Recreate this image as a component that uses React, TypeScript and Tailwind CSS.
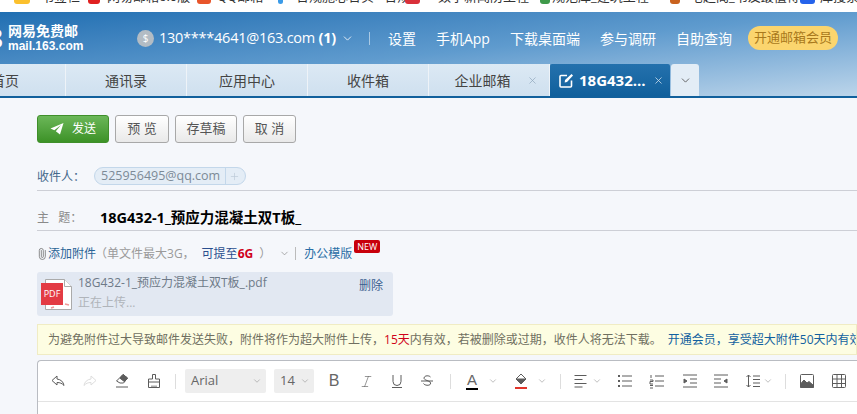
import { ChevronDown, Italic, Paperclip, Plus, X } from "lucide-react";

const BOOKMARKS = [
  { id: "b1", label: "书签栏", color: "bg-[#fbc02d]", iconW: "w-[16px]", box: "ml-[14px] w-[74px]", gap: "ml-[11px]" },
  { id: "b2", label: "网易邮箱6.0版", color: "bg-[#e02020]", iconW: "w-[12px]", box: "w-[109px]", gap: "ml-[7px]" },
  { id: "b3", label: "QQ邮箱", color: "bg-[#e8552a]", iconW: "w-[14px]", box: "w-[81px]", gap: "ml-[6px]" },
  { id: "b4", label: "合规施心合实 · 合规", color: "bg-[#3b9be8]", iconW: "w-[5px]", box: "w-[127px]", gap: "ml-[13px]" },
  { id: "b5", label: "数字新闻防工程", color: "bg-[#d9303a]", iconW: "w-[15px]", box: "w-[135px]", gap: "ml-[18px]" },
  { id: "b6", label: "规范库_建筑工程", color: "bg-[#3f9a4a]", iconW: "w-[10px]", box: "w-[130px]", gap: "ml-[2px]" },
  { id: "b7", label: "宅超阁_书友最值得", color: "bg-[#c9621e]", iconW: "w-[10px]", box: "w-[130px]", gap: "ml-[10px]" },
  { id: "b8", label: "库搜索", color: "bg-[#2563eb]", iconW: "w-[15px]", box: "w-[57px]", gap: "ml-[5px]" },
];

const NAV_LINKS = ["设置", "手机App", "下载桌面端", "参与调研", "自助查询"];

const TABS = [
  { id: "t1", label: "通讯录", close: false },
  { id: "t2", label: "应用中心", close: false },
  { id: "t3", label: "收件箱", close: false },
  { id: "t4", label: "企业邮箱", close: true },
];

function Ico({ children, className = "" }: { children: React.ReactNode; className?: string }) {
  return (
    <svg
      width="16"
      height="16"
      viewBox="0 0 16 16"
      fill="none"
      stroke="#5c5c5c"
      strokeWidth="1"
      className={`shrink-0 ${className}`}
    >
      {children}
    </svg>
  );
}

function Caret({ className = "" }: { className?: string }) {
  return <ChevronDown size={10} strokeWidth={1.5} className={`shrink-0 text-[#999] ${className}`} />;
}

function Divider({ className = "" }: { className?: string }) {
  return <span className={`h-[15px] w-px shrink-0 bg-[#ddd] ${className}`} />;
}

function GrayButton({ label, className }: { label: string; className: string }) {
  return (
    <button
      type="button"
      className={`h-[28px] rounded-[3px] border border-[#a8a8a8] bg-gradient-to-b from-white to-[#e9e9e9] text-[13px] text-[#555] ${className}`}
    >
      {label}
    </button>
  );
}

export default function App() {
  return (
    <div className="h-[414px] w-[857px] overflow-hidden bg-[#f5f7fb] font-['Open_Sans','Noto_Sans_CJK_SC',sans-serif]">
      {/* bookmarks bar, only the bottom of it is left in the crop */}
      <div className="flex h-[12px] items-start overflow-hidden bg-white">
        {BOOKMARKS.map((b) => (
          <div key={b.id} className={`flex shrink-0 items-start overflow-hidden ${b.box}`}>
            <span className={`h-[4px] shrink-0 rounded-b-[3px] ${b.iconW} ${b.color}`} />
            <span className={`mt-[-11px] whitespace-nowrap text-[13px] leading-[15px] text-[#333] ${b.gap}`}>
              {b.label}
            </span>
          </div>
        ))}
      </div>

      {/* blue header + tabs */}
      <div className="h-[86px] border-b-2 border-[#11609c] bg-gradient-to-br from-[#1f6fb2] via-[#5f9bce] to-[#bcd5ea]">
        <div className="flex h-[52px] items-center">
          <div className="ml-[-12px] mr-[12px] w-[8px] text-[26px] font-bold leading-none text-white">8</div>
          <div className="w-[124px] font-['Noto_Sans_CJK_SC',sans-serif] text-white">
            <div className="text-[14px] font-bold leading-[17px]">网易免费邮</div>
            <div className="font-['Liberation_Sans',sans-serif] text-[12px] font-bold leading-[15px]">mail.163.com</div>
          </div>
          <span className="ml-[5px] flex h-[17px] w-[17px] shrink-0 items-center justify-center rounded-full bg-[#b3bcc4] text-[10px] text-white">
            $
          </span>
          <span className="ml-[5px] whitespace-nowrap text-[14.5px] tracking-[-0.25px] text-white">
            130****4641@163.com <b>(1)</b>
          </span>
          <ChevronDown size={13} strokeWidth={1.5} className="ml-[5px] text-white" />
          <span className="ml-[15px] mr-[18px] h-[13px] w-px bg-[#a9c9e4]" />
          <div className="flex items-center gap-[20px] text-[14px] text-white">
            {NAV_LINKS.map((l) => (
              <span key={l} className="whitespace-nowrap">
                {l}
              </span>
            ))}
          </div>
          <span className="ml-[16px] flex h-[24px] w-[90px] items-center justify-center rounded-full bg-[#fbd56e] text-[13px] text-[#a9791c]">
            开通邮箱会员
          </span>
        </div>

        <div className="flex h-[32px] items-stretch text-[14px] text-[#444]">
          <div className="flex w-[66px] items-center overflow-hidden border-r border-[#eef3f8] bg-gradient-to-b from-[#dce9f4] to-[#cfe0ef]">
            <span className="ml-[-9px] whitespace-nowrap">首页</span>
          </div>
          {TABS.map((t) => (
            <div
              key={t.id}
              className={`relative flex w-[121px] items-center justify-center border-r border-[#eef3f8] bg-gradient-to-b from-[#dce9f4] to-[#cfe0ef] ${t.close ? "pr-[13px]" : ""}`}
            >
              {t.label}
              {t.close && <X size={11} strokeWidth={1.5} className="absolute right-[11px] text-[#8fa6bb]" />}
            </div>
          ))}
          <div className="flex w-[120px] items-center rounded-t-[2px] bg-gradient-to-b from-[#2471ad] to-[#10609c] pl-[9px] text-white">
            <svg width="15" height="15" viewBox="0 0 15 15" fill="none" stroke="white" strokeWidth="1.6" className="shrink-0">
              <path d="M8 2.500H2a1 1 0 0 0-1 1V13a1 1 0 0 0 1 1h9.500a1 1 0 0 0 1-1V7.500" />
              <path d="M6 7l6.500-6 1.500 1.500L8 9l-2.300.6z" fill="white" stroke="none" />
            </svg>
            <span className="ml-[5px] whitespace-nowrap text-[15px] font-bold">18G432...</span>
            <X size={11} strokeWidth={1.8} className="ml-[7px] text-[#c5d9ea]" />
          </div>
          <div className="ml-px flex w-[28px] items-center justify-center rounded-t-[3px] bg-[#e3edf6]">
            <ChevronDown size={13} strokeWidth={1.6} className="text-[#555]" />
          </div>
        </div>
      </div>

      {/* compose */}
      <div className="pl-[37px]">
        <div className="flex items-center gap-[6px] pt-[17px]">
          <button
            type="button"
            className="flex h-[28px] w-[72px] items-center justify-center rounded-[3px] border border-[#3f8f2a] bg-gradient-to-b from-[#6bb758] to-[#3c9226] text-[12px] text-white"
          >
            <svg width="14" height="14" viewBox="0 0 14 14" fill="white" className="mr-[8px]">
              <path d="M13.500 1 .5 6.500l3.800 1.700L11 3 5.800 9.300 10 12.500z" />
            </svg>
            发送
          </button>
          <GrayButton label="预 览" className="w-[54px]" />
          <GrayButton label="存草稿" className="w-[62px]" />
          <GrayButton label="取 消" className="w-[53px]" />
        </div>

        <div className="mt-[24px] flex h-[24px] items-start border-b border-[#cdcfd6]">
          <span className="w-[57px] whitespace-nowrap pt-[1px] text-[12px] leading-[18px] text-[#44688a]">收件人：</span>
          <div className="flex h-[18px] w-[152px] items-center rounded-full border border-[#c3d7ea] bg-[#e4edf6] text-[12.500px] text-[#7c8a96]">
            <span className="w-[131px] whitespace-nowrap border-r border-[#c3d7ea] pl-[6px] leading-[16px]">525956495@qq.com</span>
            <Plus size={11} strokeWidth={1.5} className="ml-[3px] text-[#bccbd8]" />
          </div>
        </div>

        <div className="flex h-[40px] items-center border-b border-[#cdcfd6] pt-[14px]">
          <span className="w-[63px] whitespace-pre text-[12px] text-[#8a8a8a]">主   题：</span>
          <span className="whitespace-nowrap text-[14.500px] font-bold text-black">18G432-1_预应力混凝土双T板_</span>
        </div>

        <div className="flex h-[40px] items-center pt-[5px] text-[12px]">
          <Paperclip size={12} strokeWidth={1.4} className="ml-[-1px] mr-0 shrink-0 -rotate-45 text-[#666]" />
          <span className="text-[#2a6496]">添加附件</span>
          <span className="ml-[-1px] text-[#9a9a9a]">（单文件最大3G，</span>
          <span className="ml-[7px] text-[#2a4f8f]">可提至</span>
          <b className="text-[#d0021b]">6G</b>
          <span className="ml-[6px] text-[#9a9a9a]">）</span>
          <ChevronDown size={11} strokeWidth={1.5} className="ml-[8px] text-[#888]" />
          <span className="ml-[5px] mr-[8px] h-[13px] w-px bg-[#bbb]" />
          <span className="text-[#2a6ea6]">办公模版</span>
          <span className="relative top-[-7px] ml-[2px] rounded-[2px] bg-[#c8000b] px-[3px] text-[9px] leading-[13px] text-white">
            NEW
          </span>
        </div>

        <div className="mt-px flex h-[44px] w-[356px] rounded-[3px] bg-[#e2e8f2]">
          <div className="relative ml-[8px] mt-[7px] h-[31px] w-[27px]">
            <svg width="27" height="31" viewBox="0 0 27 31" fill="white" stroke="#aaa" className="absolute left-0 top-0">
              <path d="M.5.5h19l7 7v23H.500z" />
              <path d="M19.500.5v7h7" />
              <path d="M20 25l4 1M6 29l3-1" stroke="#e99" strokeWidth="1.500" />
            </svg>
            <span className="absolute left-[-4px] top-[4px] flex h-[22px] w-[22px] items-center justify-center bg-[#e33b44] text-[9px] text-white">
              PDF
            </span>
          </div>
          <div className="ml-[6px] flex-1 pt-[1px] text-[12px] leading-[20px]">
            <div className="whitespace-nowrap text-[#6e7a88]">18G432-1_预应力混凝土双T板_.pdf</div>
            <div className="text-[#b0b4ba]">正在上传...</div>
          </div>
          <span className="mr-[10px] pt-[4px] text-[12px] leading-[20px] text-[#3a5f8f]">删除</span>
        </div>

        <div className="mt-[8px] flex h-[31px] items-center overflow-hidden whitespace-nowrap border border-[#f0ecc4] bg-[#fdfde2] pl-[10px] text-[12px] text-[#6f6f60]">
          为避免附件过大导致邮件发送失败，附件将作为超大附件上传，
          <span className="text-[#d0021b]">15天</span>
          内有效，若被删除或过期，收件人将无法下载。
          <span className="ml-[6px] text-[#12619f]">开通会员，享受超大附件50天内有效权益</span>
        </div>

        {/* editor */}
        <div className="mt-[5px] h-[60px] rounded-tl-[4px] border-l border-t border-[#b9bcc2] bg-white">
          <div className="flex h-[41px] items-center border-b border-[#e3e3e3] pl-[12px]">
            <Ico>
              <path d="M7 3 2 7.500 7 12V9.500c3 0 5 .8 7 3-.5-3.500-3-6-7-6.500z" />
            </Ico>
            <Ico className="ml-[16px] opacity-20">
              <path d="M9 3l5 4.500L9 12V9.500c-3 0-5 .8-7 3 .5-3.500 3-6 7-6.500z" />
            </Ico>
            <Ico className="ml-[16px]">
              <path d="M9 1.500l4.500 3.500-4 5H6L2.500 8z" fill="white" />
              <path d="M9 1.500l4.500 3.500-3 3.700-4.500-3.500z" fill="#5c5c5c" />
              <path d="M2 14h12" />
            </Ico>
            <Ico className="ml-[16px]">
              <path d="M6.500 1.500h3v4.500h4v3h-11V6h4zM2.500 9v5.500h11V9M6 12.500v2M8 12.500v2M10 12.500v2" />
            </Ico>
            <Divider className="ml-[13px]" />
            <div className="ml-[9px] flex h-[24px] w-[81px] shrink-0 items-center justify-between rounded-[2px] bg-[#eeeeee] pl-[6px] pr-[4px] text-[13px] text-[#666]">
              Arial <Caret />
            </div>
            <div className="ml-[8px] flex h-[24px] w-[40px] shrink-0 items-center justify-between rounded-[2px] bg-[#eeeeee] pl-[6px] pr-[4px] text-[13px] text-[#666]">
              14 <Caret />
            </div>
            <span className="ml-[12px] w-[16px] shrink-0 text-center font-['Liberation_Sans',sans-serif] text-[16px] leading-none text-[#666]">B</span>
            <Italic size={15} strokeWidth={1} className="ml-[17px] shrink-0 text-[#5c5c5c]" />
            <Ico className="ml-[15px]">
              <path d="M4 2v6.500a4 4 0 0 0 8 0V2M3 14.500h10" />
            </Ico>
            <Ico className="ml-[14px]">
              <path d="M11.500 4c-1-1.500-6-2-6.500 1 0 1 1 1.800 3 2.500 3 1 4 2 3.500 3.500-1 2-6 1.500-7-.5M2 8h12" />
            </Ico>
            <Divider className="ml-[15px]" />
            <div className="ml-[13px] flex w-[16px] shrink-0 flex-col items-center">
              <span className="font-['Liberation_Sans',sans-serif] text-[15px] leading-[14px] text-[#666]">A</span>
              <span className="mt-[1px] h-[2px] w-[12px] bg-black" />
            </div>
            <Caret className="ml-[8px]" />
            <div className="ml-[15px] flex w-[16px] shrink-0 flex-col items-center">
              <svg width="14" height="12" viewBox="0 0 14 12" fill="none" stroke="#5c5c5c">
                <path d="M7 1l5 5-5 5-5-5z" />
                <path d="M2 6h10l-5 5z" fill="#5c5c5c" />
              </svg>
              <span className="mt-[2px] h-[2px] w-[12px] bg-[#e0352b]" />
            </div>
            <Caret className="ml-[8px]" />
            <Divider className="ml-[13px]" />
            <Ico className="ml-[12px]">
              <path d="M1.500 2.500h12M1.500 6.500h8M1.500 10.500h12M1.500 14h8" />
            </Ico>
            <Caret className="ml-[3px]" />
            <Ico className="ml-[15px]">
              <path d="M5 3h10M5 8h10M5 13h10" />
              <path d="M1 3h2M1 8h2M1 13h2" strokeWidth="2" />
            </Ico>
            <Ico className="ml-[16px]">
              <path d="M6 3h9M6 8h9M6 13h9M2 2v3M1 7h3v1.500H1V11h3M1 12.500h3M1 15h3" />
            </Ico>
            <Ico className="ml-[17px]">
              <path d="M1 2h14M8 6h7M8 10h7M1 14h14" />
              <path d="M2 6v4l3-2z" fill="#5c5c5c" />
            </Ico>
            <Ico className="ml-[15px]">
              <path d="M1 2h14M1 6h7M1 10h7M1 14h14" />
              <path d="M14 6v4l-3-2z" fill="#5c5c5c" />
            </Ico>
            <Ico className="ml-[16px]">
              <path d="M3.500 2v12M1.500 4l2-2 2 2M1.500 12l2 2 2-2M8 3h7M8 6.500h7M8 10h7M8 13.500h7" />
            </Ico>
            <Caret className="ml-[2px]" />
            <Divider className="ml-[12px]" />
            <Ico className="ml-[13px]">
              <rect x="1.500" y="1.500" width="13" height="13" rx="1" />
              <path d="M1.500 14.500V11l3.500-4 3 3 2-1.500 4.500 4v2z" fill="#5c5c5c" />
            </Ico>
            <Ico className="ml-[16px]">
              <rect x="1.500" y="1.500" width="13" height="13" rx="1" />
              <path d="M1.500 6h13M1.500 10.500h13M6 1.500v13M10.500 1.500v13" />
            </Ico>
          </div>
        </div>
      </div>
    </div>
  );
}
